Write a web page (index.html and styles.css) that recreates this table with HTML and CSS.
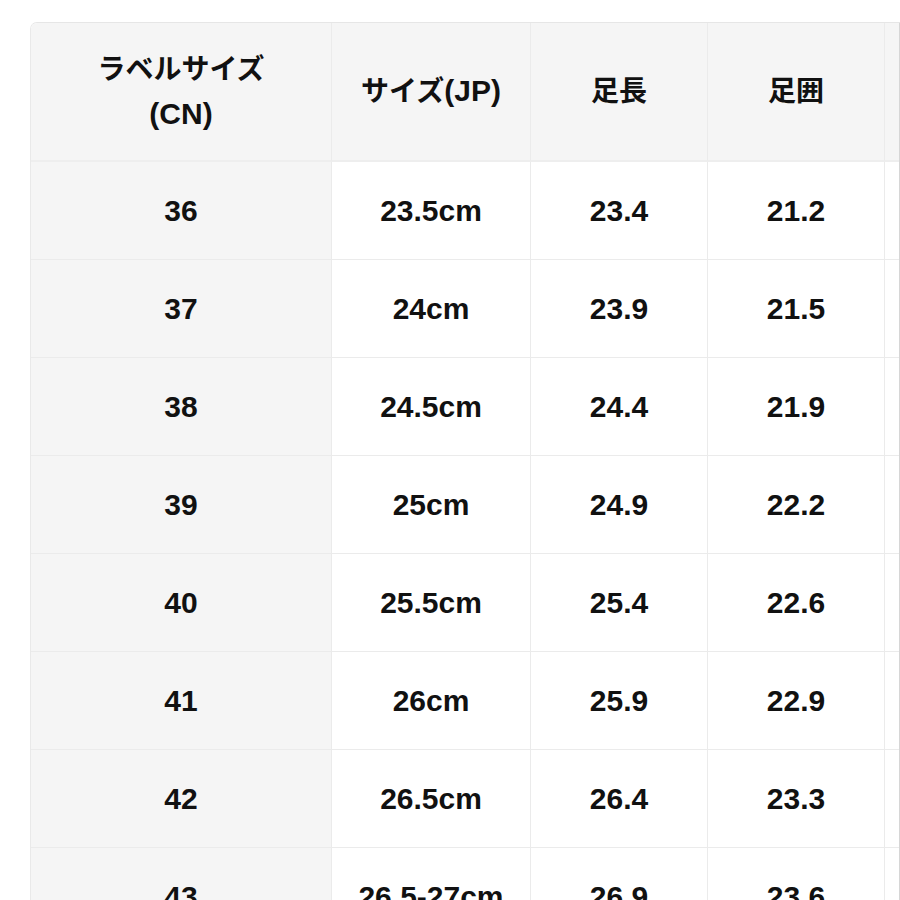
FILE: index.html
```html
<!DOCTYPE html>
<html lang="ja">
<head>
<meta charset="utf-8">
<title>サイズ表</title>
<link rel="stylesheet" href="styles.css">
</head>
<body>
<div class="wrap">
<table class="size">
<thead>
<tr>
<th class="c1"><span class="jp">ラベルサイズ</span><br>(CN)</th>
<th class="c2"><span class="jp">サイズ</span>(JP)</th>
<th class="c3"><span class="jp">足長</span></th>
<th class="c4"><span class="jp">足囲</span></th>
<th class="c5"></th>
</tr>
</thead>
<tbody>
<tr><td class="first">36</td><td>23.5cm</td><td>23.4</td><td>21.2</td><td></td></tr>
<tr><td class="first">37</td><td>24cm</td><td>23.9</td><td>21.5</td><td></td></tr>
<tr><td class="first">38</td><td>24.5cm</td><td>24.4</td><td>21.9</td><td></td></tr>
<tr><td class="first">39</td><td>25cm</td><td>24.9</td><td>22.2</td><td></td></tr>
<tr><td class="first">40</td><td>25.5cm</td><td>25.4</td><td>22.6</td><td></td></tr>
<tr><td class="first">41</td><td>26cm</td><td>25.9</td><td>22.9</td><td></td></tr>
<tr><td class="first">42</td><td>26.5cm</td><td>26.4</td><td>23.3</td><td></td></tr>
<tr><td class="first">43</td><td>26.5-27cm</td><td>26.9</td><td>23.6</td><td></td></tr>
</tbody>
</table>
</div>
</body>
</html>
```
FILE: styles.css
```css
html, body {
  margin: 0;
  padding: 0;
  background: #ffffff;
  overflow: hidden;
  height: 900px;
}
.wrap {
  margin: 22px 0 0 30px;
  width: 868px;
  height: 900px;
  overflow: hidden;
  border-top: 1px solid #e6e6e6;
  border-left: 1px solid #e9e9e9;
  border-right: 1px solid #d6d6d6;
  border-top-left-radius: 7px;
}
.size {
  border-collapse: separate;
  border-spacing: 0;
  table-layout: fixed;
  width: 1055px;
  font-family: "Liberation Sans", "Noto Sans CJK JP", sans-serif;
  font-weight: 700;
  font-size: 30px;
  color: #111111;
}
.size th,
.size td {
  padding: 0;
  text-align: center;
  vertical-align: middle;
  border-right: 1px solid #ebebeb;
  border-bottom: 1px solid #ebebeb;
}
.size th {
  height: 137px;
  line-height: 44px;
  background: #f5f5f5;
  font-weight: 700;
  border-bottom: 2px solid #eeeeee;
}
.size .jp {
  font-size: 28px;
}
.size td {
  height: 97px;
  line-height: 36px;
  background: #ffffff;
}
.size td.first {
  background: #f5f5f5;
}
.c1 { width: 300px; }
.c2 { width: 198px; }
.c3 { width: 176px; }
.c4 { width: 176px; }
.c5 { width: 200px; }
```
